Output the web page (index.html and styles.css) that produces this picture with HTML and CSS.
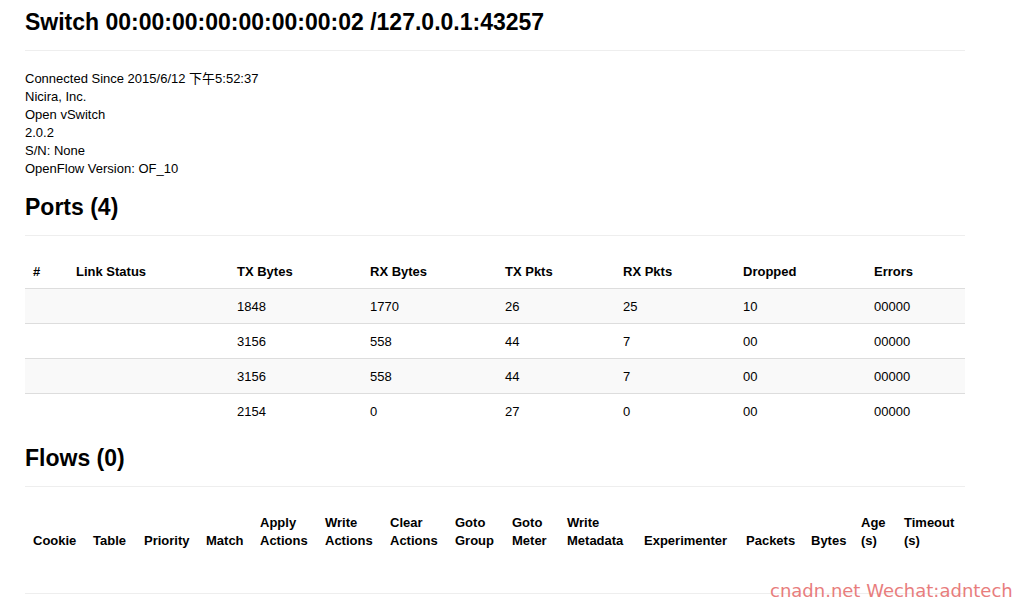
FILE: index.html
```html
<!DOCTYPE html>
<html>
<head>
<meta charset="utf-8">
<title>Switch</title>
<link rel="stylesheet" href="styles.css">
</head>
<body>
<div class="container">
  <div class="page-header first">
    <h1>Switch 00:00:00:00:00:00:00:02 /127.0.0.1:43257</h1>
  </div>
  <div class="info">
    <div>Connected Since 2015/6/12 下午5:52:37</div>
    <div>Nicira, Inc.</div>
    <div>Open vSwitch</div>
    <div>2.0.2</div>
    <div>S/N: None</div>
    <div>OpenFlow Version: OF_10</div>
  </div>

  <div class="page-header ports-header">
    <h2>Ports (4)</h2>
  </div>
  <table class="table striped ports">
    <thead>
      <tr>
        <th class="p1">#</th><th class="p2">Link Status</th><th class="p3">TX Bytes</th><th class="p4">RX Bytes</th><th class="p5">TX Pkts</th><th class="p6">RX Pkts</th><th class="p7">Dropped</th><th class="p8">Errors</th>
      </tr>
    </thead>
    <tbody>
      <tr><td></td><td></td><td>1848</td><td>1770</td><td>26</td><td>25</td><td>10</td><td>00000</td></tr>
      <tr><td></td><td></td><td>3156</td><td>558</td><td>44</td><td>7</td><td>00</td><td>00000</td></tr>
      <tr><td></td><td></td><td>3156</td><td>558</td><td>44</td><td>7</td><td>00</td><td>00000</td></tr>
      <tr><td></td><td></td><td>2154</td><td>0</td><td>27</td><td>0</td><td>00</td><td>00000</td></tr>
    </tbody>
  </table>

  <div class="page-header flows-header">
    <h2>Flows (0)</h2>
  </div>
  <table class="table flows">
    <thead>
      <tr>
        <th class="f1">Cookie</th>
        <th class="f2">Table</th>
        <th class="f3">Priority</th>
        <th class="f4">Match</th>
        <th class="f5">Apply Actions</th>
        <th class="f6">Write Actions</th>
        <th class="f7">Clear Actions</th>
        <th class="f8">Goto Group</th>
        <th class="f9">Goto Meter</th>
        <th class="f10">Write Metadata</th>
        <th class="f11">Experimenter</th>
        <th class="f12">Packets</th>
        <th class="f13">Bytes</th>
        <th class="f14">Age (s)</th>
        <th class="f15">Timeout (s)</th>
      </tr>
    </thead>
    <tbody></tbody>
  </table>
  <hr class="rule">
</div>
<div class="watermark">cnadn.net Wechat:adntech</div>
</body>
</html>
```

FILE: styles.css
```css
html, body {
  margin: 0;
  padding: 0;
  background: #fff;
}
body {
  font-family: "Liberation Sans", Arial, "Noto Sans CJK SC", sans-serif;
  font-size: 13px;
  line-height: 18px;
  color: #000;
}
.container {
  width: 940px;
  margin-left: 25px;
}
.page-header {
  padding-bottom: 10px;
  margin: 0 0 18px;
  border-bottom: 1px solid #eee;
}
.page-header.first {
  margin-top: 4px;
  margin-bottom: 19px;
}
.page-header.ports-header {
  margin-top: 11px;
}
.page-header.flows-header {
  margin-top: 12px;
  margin-bottom: 18px;
}
h1, h2 {
  margin: 0;
  font-size: 23px;
  line-height: 36px;
  font-weight: bold;
  color: #000;
}
.info {
  margin: 0;
}
.table {
  width: 100%;
  border-collapse: collapse;
  border-spacing: 0;
  table-layout: fixed;
  margin: 0;
}
.table th, .table td {
  box-sizing: border-box;
  padding: 9px 8px 7px;
  line-height: 18px;
  text-align: left;
  vertical-align: top;
  border-top: 1px solid #ddd;
}
.table thead th {
  vertical-align: bottom;
  border-top: 0;
  font-weight: bold;
}
.striped tbody tr:nth-child(odd) td {
  background: #f9f9f9;
}
.p1 { width: 43px; }
.p2 { width: 161px; }
.p3 { width: 133px; }
.p4 { width: 135px; }
.p5 { width: 118px; }
.p6 { width: 120px; }
.p7 { width: 131px; }
.p8 { width: 99px; }

.f1 { width: 60px; }
.f2 { width: 51px; }
.f3 { width: 62px; }
.f4 { width: 54px; }
.f5 { width: 65px; }
.f6 { width: 65px; }
.f7 { width: 65px; }
.f8 { width: 57px; }
.f9 { width: 55px; }
.f10 { width: 77px; }
.f11 { width: 102px; }
.f12 { width: 65px; }
.f13 { width: 50px; }
.f14 { width: 43px; }
.f15 { width: 69px; }

.rule {
  margin: 36px 0 0;
  border: 0;
  border-top: 1px solid #eee;
}
.watermark {
  position: absolute;
  left: 770px;
  top: 580px;
  font-family: "DejaVu Sans", sans-serif;
  font-size: 18px;
  line-height: 22px;
  color: #e87d7d;
  white-space: nowrap;
}
```
